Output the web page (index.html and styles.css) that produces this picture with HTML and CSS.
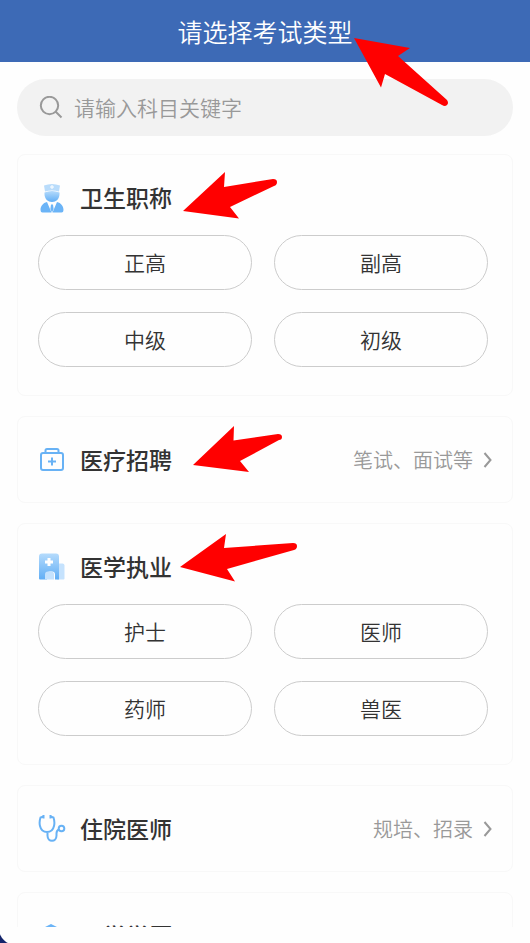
FILE: index.html
```html
<!DOCTYPE html>
<html lang="zh-CN">
<head>
<meta charset="utf-8">
<meta name="viewport" content="width=device-width, initial-scale=1">
<title>请选择考试类型</title>
<link rel="stylesheet" href="styles.css">
</head>
<body>
<header class="topbar"><h1>请选择考试类型</h1></header>
<main class="content">
  <label class="search">
    <svg class="search-icon" viewBox="0 0 24 24" aria-hidden="true"><circle cx="10.500" cy="9.500" r="8.700"/><path d="M16.500 15.500 22.500 21.500"/></svg>
    <input type="search" placeholder="请输入科目关键字" aria-label="请输入科目关键字">
  </label>

  <section class="card">
    <div class="row">
      <svg class="icon" viewBox="0 0 28 32" aria-hidden="true">
        <defs><linearGradient id="blue" x1="0" y1="0" x2="0" y2="1"><stop offset="0" stop-color="#b5dbfc"/><stop offset="1" stop-color="#61aef5"/></linearGradient></defs>
        <path fill="#b9dcfb" d="M6 3.500Q14 .5 22 3.500L21 9.500Q14 7.500 7 9.500Z"/>
        <path fill="url(#blue)" d="M6.500 10.500Q14 7.500 21.500 10.500V12C21.500 17 18 20 14 20S6.500 17 6.500 12Z"/>
        <path stroke="#fff" stroke-width="1" d="M14 3v4M12 5h4"/>
        <path fill="#6bb4f7" d="M9 20 13.500 30.500H4.500Q2.500 30.500 2.500 28C2.500 24 5 21 9 20ZM19 20 14.500 30.500H23.500Q25.500 30.500 25.500 28C25.500 24 23 21 19 20ZM13 22.500h2l.6 4.500L14 30.500 12.400 27Z"/>
      </svg>
      <h2>卫生职称</h2>
    </div>
    <div class="options">
      <button type="button">正高</button>
      <button type="button">副高</button>
      <button type="button">中级</button>
      <button type="button">初级</button>
    </div>
  </section>

  <section class="card">
    <a class="row" href="#recruit">
      <svg class="icon line" viewBox="0 0 28 32" aria-hidden="true"><rect x="3" y="9" width="22" height="17" rx="2"/><path d="M7.500 9V6.500q0-1.500 1.500-1.500h10q1.500 0 1.500 1.500V9M14 13.500v8M10 17.500h8"/></svg>
      <h2>医疗招聘</h2>
      <span class="note">笔试、面试等</span>
      <svg class="chevron" viewBox="0 0 10 18" aria-hidden="true"><path d="m1.500 2 6 7-6 7"/></svg>
    </a>
  </section>

  <section class="card">
    <div class="row">
      <svg class="icon" viewBox="0 0 28 32" aria-hidden="true">
        <path fill="#c5e2fd" d="M19 12.500h5.500q2 0 2 2v13q0 1-1 1H19Z"/>
        <path fill="url(#blue)" d="M4 2.500h14q3 0 3 3V28.500h-4v-5q0-3-3-3h-2q-3 0-3 3v5H2q-1 0-1-1V5.500q0-3 3-3Z"/>
        <path fill="#c5e2fd" d="M7 28.500v-5q0-3 3-3h3q3 0 3 3v5Z"/>
        <path stroke="#fff" stroke-width="3" d="M11 7v8M7 11h8"/>
      </svg>
      <h2>医学执业</h2>
    </div>
    <div class="options">
      <button type="button">护士</button>
      <button type="button">医师</button>
      <button type="button">药师</button>
      <button type="button">兽医</button>
    </div>
  </section>

  <section class="card">
    <a class="row" href="#resident">
      <svg class="icon line" viewBox="0 0 28 32" aria-hidden="true"><path d="M5.500 3.500 2.500 4.500Q1 9 2 13C3 17.500 6 19 9 19S15 17.500 16 13Q17 9 15.500 4.500L12.500 3.500M5.500 2V5.500M12.500 2V5.500M9.500 19V22.500C9.500 29.500 18.500 29.500 18.500 22.500V20.500C18.500 18 19.500 17 21 16.500"/><circle cx="23.500" cy="15.500" r="2.800"/></svg>
      <h2>住院医师</h2>
      <span class="note">规培、招录</span>
      <svg class="chevron" viewBox="0 0 10 18" aria-hidden="true"><path d="m1.500 2 6 7-6 7"/></svg>
    </a>
  </section>

  <section class="card">
    <a class="row" href="#degree">
      <svg class="icon" viewBox="0 0 28 32" aria-hidden="true"><path fill="#6bb4f7" d="M13 4 25 10 13 16 1 10ZM6 14l7 4 7-4v7q-7 5-14 0Z"/></svg>
      <h2>医学学历</h2>
    </a>
  </section>
</main>
<footer class="bottom"></footer>
<svg class="arrows" width="530" height="943" viewBox="0 0 530 943" aria-hidden="true">
  <path d="M354 38 410 48 398 56 447 100Q449 103 447 105T442 105L385 74 381 87.500Z"/>
  <path d="M183 211 225 172 224 187 273 179Q277 179 277 182T274 186L230 207 239 218.500Z"/>
  <path d="M193 465 234 426 233.500 440.500 278 434Q282 434 282 437T279 440L240 461 249 472Z"/>
  <path d="M180 567 226 534 224 548 293 543Q297 543 297 546T294 550L227 569 235 581.500Z"/>
</svg>
</body>
</html>
```
FILE: styles.css
```css
* {
  box-sizing: border-box;
}

body {
  margin: 0;
  height: 100vh;
  display: flex;
  flex-direction: column;
  position: relative;
  overflow: hidden;
  background: #fefefe;
  color: #333;
  font-family: "Noto Sans CJK SC", sans-serif;
  font-weight: 350;
}

h1,
h2 {
  margin: 0;
}

.topbar {
  flex: none;
  height: 62px;
  display: flex;
  align-items: center;
  justify-content: center;
  background: #3d6ab6;
  color: #fff;
}

.topbar h1 {
  font-size: 25px;
  font-weight: 350;
}

.content {
  flex: 1;
  min-height: 0;
  overflow: hidden;
  padding: 17px 17px 0;
}

.search {
  display: flex;
  align-items: center;
  gap: 11px;
  height: 57px;
  margin-bottom: 18px;
  padding: 0 22px;
  border-radius: 29px;
  background: #f2f2f2;
}

.search-icon {
  flex: none;
  width: 24px;
  height: 24px;
  fill: none;
  stroke: #999;
  stroke-width: 2;
}

.search input {
  flex: 1;
  min-width: 0;
  padding: 0 0 2px;
  border: 0;
  outline: 0;
  background: none;
  color: #333;
  font: inherit;
  font-size: 21px;
}

.search input::placeholder {
  color: #999;
}

.card {
  margin-bottom: 20px;
  padding: 26px 24px 26px 20px;
  border: 1px solid #f8f8f8;
  border-radius: 8px;
}

.row {
  display: flex;
  align-items: center;
  height: 33px;
  color: inherit;
  text-decoration: none;
}

.icon {
  flex: none;
  width: 28px;
  height: 32px;
  margin-right: 14px;
}

.line {
  fill: none;
  stroke: #68b2f5;
  stroke-width: 2;
}

.row h2 {
  padding-bottom: 2px;
  font-size: 23px;
  font-weight: 500;
}

.note {
  margin-left: auto;
  color: #999;
  font-size: 20px;
}

.chevron {
  width: 10px;
  height: 18px;
  margin-left: 10px;
  margin-right: -5px;
  fill: none;
  stroke: #999;
  stroke-width: 2;
}

.options {
  display: grid;
  grid-template-columns: 1fr 1fr;
  gap: 22px;
  margin: 21px 0 2px;
}

.options button {
  height: 55px;
  padding: 0 0 2px;
  border: 1px solid #ccc;
  border-radius: 28px;
  background: #fefefe;
  color: #333;
  font: inherit;
  font-size: 21px;
}

.bottom {
  flex: none;
  height: 16px;
  background: radial-gradient(circle at 17px 0, transparent 18px, #14246b 19px) left bottom / 8px 16px no-repeat;
}

.arrows {
  position: absolute;
  top: 0;
  left: 0;
  fill: #f00;
  pointer-events: none;
}
```
